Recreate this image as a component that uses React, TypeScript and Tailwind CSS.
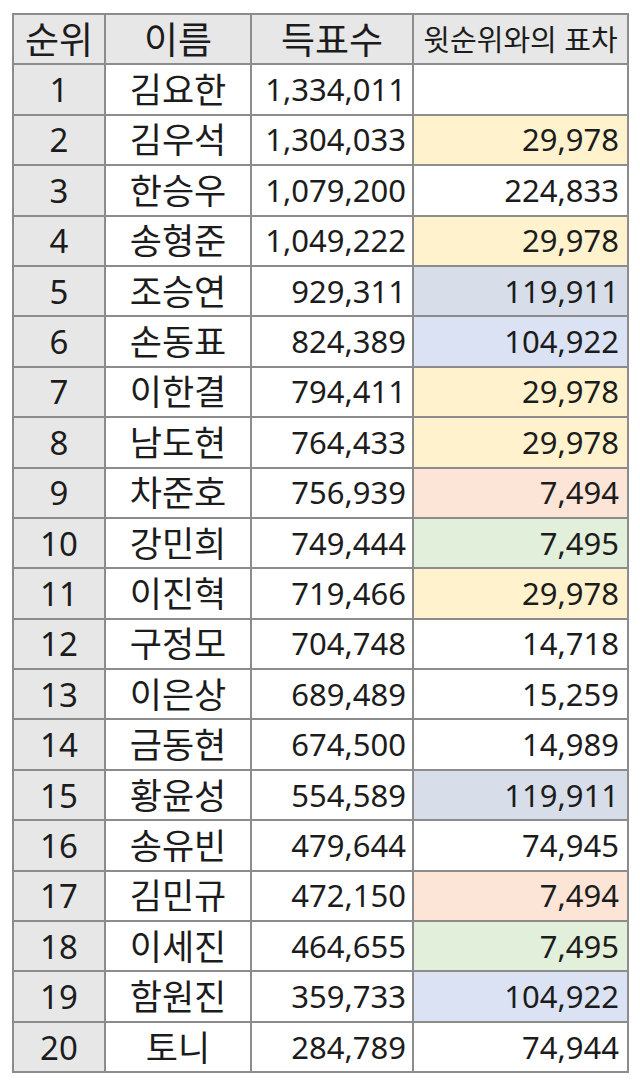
const ROWS: [number, string, string, string, string][] = [
  [1, '김요한', '1,334,011', '', ''],
  [2, '김우석', '1,304,033', '29,978', 'orange'],
  [3, '한승우', '1,079,200', '224,833', ''],
  [4, '송형준', '1,049,222', '29,978', 'orange'],
  [5, '조승연', '929,311', '119,911', 'slate'],
  [6, '손동표', '824,389', '104,922', 'blue'],
  [7, '이한결', '794,411', '29,978', 'orange'],
  [8, '남도현', '764,433', '29,978', 'orange'],
  [9, '차준호', '756,939', '7,494', 'pink'],
  [10, '강민희', '749,444', '7,495', 'green'],
  [11, '이진혁', '719,466', '29,978', 'orange'],
  [12, '구정모', '704,748', '14,718', ''],
  [13, '이은상', '689,489', '15,259', ''],
  [14, '금동현', '674,500', '14,989', ''],
  [15, '황윤성', '554,589', '119,911', 'slate'],
  [16, '송유빈', '479,644', '74,945', ''],
  [17, '김민규', '472,150', '7,494', 'pink'],
  [18, '이세진', '464,655', '7,495', 'green'],
  [19, '함원진', '359,733', '104,922', 'blue'],
  [20, '토니', '284,789', '74,944', ''],
];

const FILL: Record<string, string> = {
  '': 'bg-white',
  orange: 'bg-[#fff2cc]',
  slate: 'bg-[#d8dee9]',
  blue: 'bg-[#dbe2f3]',
  pink: 'bg-[#fce4d6]',
  green: 'bg-[#e2efda]',
};

const cell = 'border-2 border-[#8c8c8c] h-[50.4px] p-0 leading-none';

export default function App() {
  return (
    <div
      className="w-[640px] h-[1086px] bg-white pt-[13px] pl-[12px] text-[#1c1c1c]"
      style={{ fontFamily: '"Noto Sans", "Noto Sans CJK KR", sans-serif' }}
    >
      <table className="table-fixed border-collapse w-[615px]">
        <colgroup>
          <col className="w-[92px]" />
          <col className="w-[146px]" />
          <col className="w-[162px]" />
          <col className="w-[215px]" />
        </colgroup>
        <thead>
          <tr className="bg-[#e7e7e7] text-[37px]">
            <th className={`${cell} font-normal text-center`}>순위</th>
            <th className={`${cell} font-normal text-center`}>이름</th>
            <th className={`${cell} font-normal text-center`}>득표수</th>
            <th className={`${cell} font-normal text-center text-[29px]`}>윗순위와의 표차</th>
          </tr>
        </thead>
        <tbody className="text-[31px]">
          {ROWS.map(([rank, name, votes, gap, tone]) => (
            <tr key={rank}>
              <td className={`${cell} bg-[#e7e7e7] text-center text-[33px]`}>{rank}</td>
              <td className={`${cell} text-center text-[35px]`}>{name}</td>
              <td className={`${cell} text-right pr-[6px]`}>{votes}</td>
              <td className={`${cell} ${FILL[tone]} text-right pr-[8px]`}>{gap}</td>
            </tr>
          ))}
        </tbody>
      </table>
    </div>
  );
}
